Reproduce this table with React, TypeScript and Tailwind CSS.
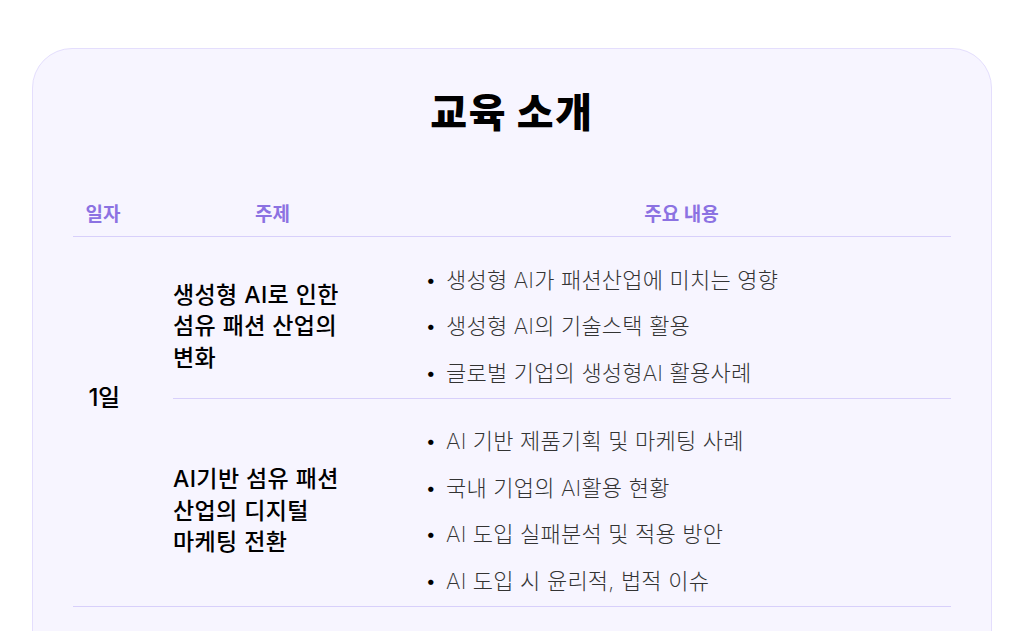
import React from 'react';

type Session = {
  topic: string[];
  items: string[];
};

const sessions: Session[] = [
  {
    topic: ['생성형 AI로 인한', '섬유 패션 산업의', '변화'],
    items: [
      '생성형 AI가 패션산업에 미치는 영향',
      '생성형 AI의 기술스택 활용',
      '글로벌 기업의 생성형AI 활용사례',
    ],
  },
  {
    topic: ['AI기반 섬유 패션', '산업의 디지털', '마케팅 전환'],
    items: [
      'AI 기반 제품기획 및 마케팅 사례',
      '국내 기업의 AI활용 현황',
      'AI 도입 실패분석 및 적용 방안',
      'AI 도입 시 윤리적, 법적 이슈',
    ],
  },
];

const font = { fontFamily: 'Inter, "Noto Sans CJK KR", sans-serif' };

export default function App() {
  return (
    <div className="min-h-[631px] bg-white pt-[48px] px-[32px] overflow-hidden" style={font}>
      <section className="rounded-t-[40px] border border-[#e4defd] bg-[#f7f5ff] px-[40px] pt-[38px] pb-[40px]">
        <h2 className="text-center text-[40px] leading-[52px] font-black text-black tracking-[1.7px]">
          교육 소개
        </h2>

        <div className="mt-[58px]">
          <div className="grid grid-cols-[60px_279px_1fr] h-[40px] pb-[3px] items-center border-b border-[#d8d0fb] text-[19px] font-bold text-[#8c72e2]">
            <div className="text-center">일자</div>
            <div className="text-center">주제</div>
            <div className="text-center">주요 내용</div>
          </div>

          <div className="flex border-b border-[#d8d0fb]">
            <div className="w-[100px] shrink-0 flex items-center pb-[46px]">
              <span className="w-[62px] text-center text-[24px] font-medium text-black tracking-[-0.5px]">1일</span>
            </div>
            <div className="flex-1">
              {sessions.map((s, i) => (
                <div
                  key={i}
                  className={`flex items-center pt-[20px] pb-[1px] ${i === 0 ? 'border-b border-[#d8d0fb]' : ''}`}
                >
                  <div className="w-[239px] shrink-0 text-[23px] leading-[31.5px] font-medium text-black tracking-[0.4px]">
                    {s.topic.map((t) => (
                      <div key={t}>{t}</div>
                    ))}
                  </div>
                  <ul className="flex-1 pl-[14px]">
                    {s.items.map((item) => (
                      <li key={item} className="h-[46.5px] flex items-center text-[22px] font-extralight text-[#333333] tracking-[0.2px]">
                        <span className="w-[20px] text-[17px] font-normal text-black">•</span>
                        {item}
                      </li>
                    ))}
                  </ul>
                </div>
              ))}
            </div>
          </div>
        </div>
      </section>
    </div>
  );
}
